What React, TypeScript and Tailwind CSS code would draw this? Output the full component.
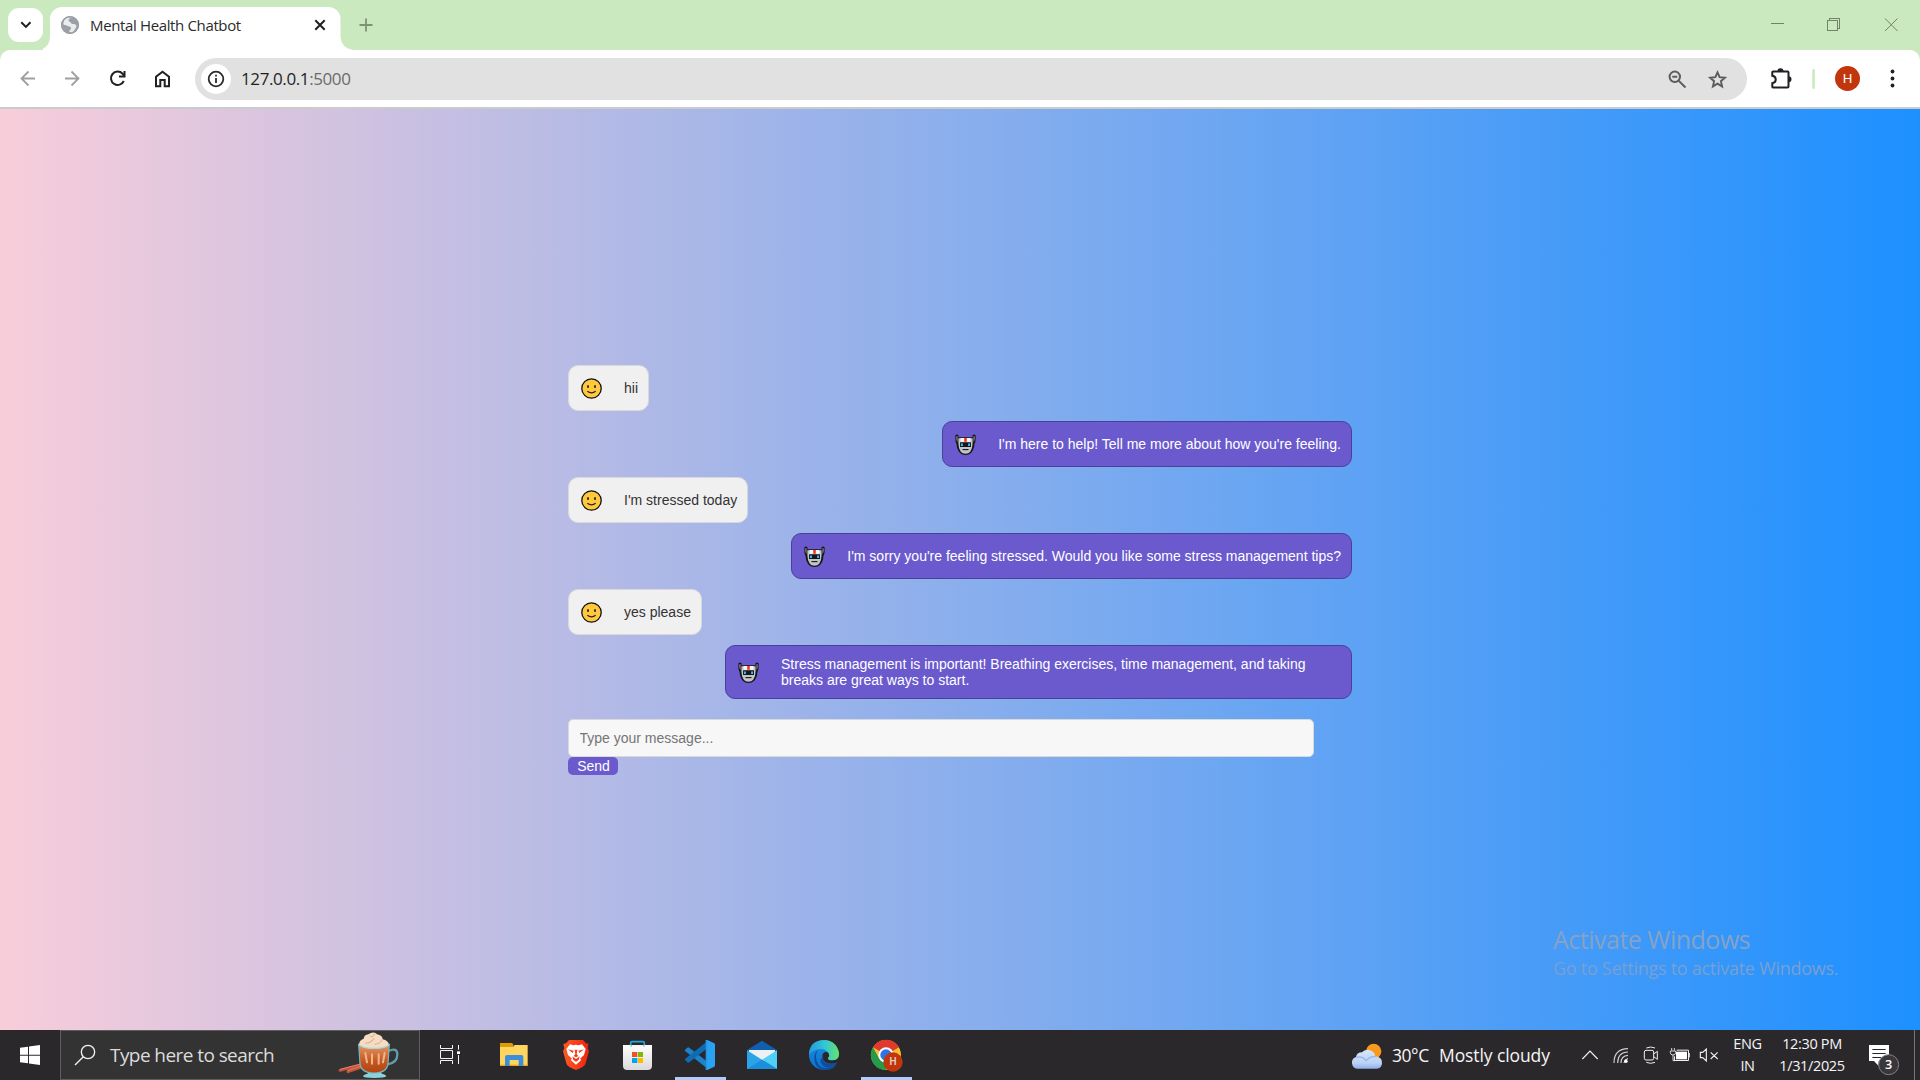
import React from 'react';

const SEGOE = "font-['Open_Sans','Noto_Sans',sans-serif]";

function TabStrip() {
  return (
    <div className="flex h-[50px] shrink-0 bg-[#cbe9bf]">
      <button className="ml-2 mt-2 flex h-[34px] w-[35px] shrink-0 items-center justify-center rounded-[11px] bg-white">
        <svg width="35" height="34" viewBox="0 0 35 34" fill="none" stroke="#1f1f1f" strokeWidth="2">
          <path d="M13.3 14.3l4.6 4.6 4.6-4.6" />
        </svg>
      </button>
      <div className="grid h-[50px] w-[310px] shrink-0">
        <svg className="col-start-1 row-start-1" width="310" height="50" viewBox="0 0 310 50">
          <path d="M-8 50Q7 50 7 36V19A12 12 0 0 1 19 7H285.500A12 12 0 0 1 297.500 19V36Q298.500 50 313 50Z" fill="#fff" />
          <circle cx="27" cy="25" r="9" fill="#9aa0a6" />
          <path d="M21 20.500c1.500-2.800 4.500-3.800 7.800-3.200-1.200 1.200-3.400 1.200-3.300 3.200.1 1.600 2.200 1 2.600 2.600.4 1.800 3.200.4 4.600 1.700 1 .9 1 2.600-.3 3.700-.9 1.100-1.300 3-3.500 3.800-1 .3-3-.1-2.600-1.200.3-1.400 1.800-1.200 1.800-3.100-.1-1.700-2.800-1.300-4-2.300-1-.8-3.300-.5-3.900-1.700" fill="#e9ebed" />
          <circle cx="27" cy="25" r="8.300" fill="none" stroke="#9aa0a6" strokeWidth="1.400" />
          <path d="M272.300 20.300l9.400 9.400M281.700 20.300l-9.400 9.400" stroke="#1f1f1f" strokeWidth="2" />
        </svg>
        <span className={`${SEGOE} col-start-1 row-start-1 ml-[47px] mt-[10px] whitespace-nowrap text-[15px] leading-[30px] tracking-[-0.360px] text-[#2b2b2b]`}>
          Mental Health Chatbot
        </span>
      </div>
      <svg className="shrink-0" width="32" height="50" viewBox="353 0 32 50" stroke="#7f9278" strokeWidth="1.800">
        <path d="M359.500 25h13M366 18.500v13" />
      </svg>
      <div className="grow" />
      <svg className="shrink-0" width="180" height="50" viewBox="1740 0 180 50" fill="none" stroke="#72836b" strokeWidth="1" shapeRendering="crispEdges">
        <path d="M1771 23.500h13" />
        <path d="M1827.500 20.500h10v10h-10zM1829.500 20v-1.500h10v10h-1.500" />
        <path d="M1885 18.500l12.500 12.500M1897.500 18.500l-12.500 12.500" shapeRendering="auto" />
      </svg>
    </div>
  );
}

function Toolbar() {
  return (
    <div className="h-[59px] shrink-0 bg-[#cbe9bf]">
      <div className="flex h-[59px] items-center rounded-t-[10px] border-b-2 border-[#cacccb] bg-white">
        <svg className="shrink-0" width="195" height="57" viewBox="0 50 195 57" fill="none" strokeWidth="2">
          <g stroke="#a0a0a0" strokeWidth="1.800">
            <path d="M35 78.500H21.500M28.500 71.500l-7 7 7 7" />
            <path d="M65 78.500h13.500M71.500 71.500l7 7-7 7" />
          </g>
          <g stroke="#202124" strokeWidth="2">
            <path d="M123.800 81a6.700 6.700 0 1 1-1.200-7.300l1.600 1.800" />
            <path d="M124.500 71v5.500h-5.500" />
            <path d="M156 86.300v-9.500l6.500-5 6.500 5v9.500h-4.300v-6.300h-4.400v6.300z" />
          </g>
        </svg>
        <div className="mt-[1px] flex h-[42px] w-[1552px] shrink-0 items-center rounded-full bg-[#e1e1e1] pl-1.5">
          <span className="flex size-[30px] items-center justify-center rounded-full bg-white">
            <svg width="18" height="18" viewBox="0 0 18 18" fill="none" stroke="#2b2c2e" strokeWidth="1.800">
              <circle cx="9" cy="9" r="7.300" />
              <path d="M9 8v5M9 4.800v1.800" />
            </svg>
          </span>
          <span className={`${SEGOE} ml-[10px] w-[200px] whitespace-nowrap text-[17px] leading-[24px] tracking-[-0.400px] text-[#1f1f1f]`}>
            127.0.0.1<span className="text-[#6b6b6b]">:5000</span>
          </span>
          <span className="grow" />
          <svg width="87" height="42" viewBox="1660 58 87 42" fill="none" stroke="#5c5c5c" strokeWidth="2">
            <circle cx="1674.800" cy="76.800" r="5.200" />
            <path d="M1678.600 80.600l6.900 6.900M1672.300 76.800h5" />
            <path d="M1717.500 72.300l2.100 4.900 5.300.5-4 3.500 1.200 5.200-4.600-2.800-4.600 2.800 1.200-5.200-4-3.500 5.300-.5z" strokeWidth="1.900" />
          </svg>
        </div>
        <svg className="shrink-0" width="173" height="57" viewBox="1747 50 173 57" fill="none">
          <path d="M1773 71.500h14.500q1 0 1 1v14q0 1-1 1H1773q-.7 0-.7-.8v-3.500c4.600-.8 4.600-6.600 0-7.400v-3.500q0-.8.7-.8z" stroke="#202124" strokeWidth="2" />
          <path d="M1777.500 71.300a3 3 0 0 1 6 0zM1788.500 76.300a3 3 0 0 1 0 6z" fill="#202124" />
          <rect x="1812.300" y="69" width="2.600" height="20" rx="1.300" fill="#cbe9bf" />
          <circle cx="1847.500" cy="78.500" r="12.500" fill="#c1360b" />
          <text x="1847.500" y="83.300" textAnchor="middle" fontFamily="Roboto" fontSize="13.500" fill="#fff">H</text>
          <g fill="#202124">
            <circle cx="1892.500" cy="71.500" r="1.900" />
            <circle cx="1892.500" cy="78.500" r="1.900" />
            <circle cx="1892.500" cy="85.500" r="1.900" />
          </g>
        </svg>
      </div>
    </div>
  );
}

function Smiley() {
  return (
    <svg className="shrink-0" width="21" height="21" viewBox="0 0 21 21">
      <circle cx="10.500" cy="10.500" r="9.700" fill="#ffc83d" stroke="#111" strokeWidth="1.300" />
      <ellipse cx="7" cy="8.500" rx="1" ry="1.500" fill="#222" />
      <ellipse cx="14" cy="8.500" rx="1" ry="1.500" fill="#222" />
      <path d="M6.300 13.300q4.200 3.200 8.400 0" fill="none" stroke="#222" strokeWidth="1.100" />
    </svg>
  );
}

function Robot() {
  return (
    <svg className="shrink-0" width="21" height="21" viewBox="0 0 21 21">
      <path d="M.4 1.200q1.500-1.500 3.100 0V3.200h14V1.200q1.600-1.500 3.100 0V6q-.2 2.500-1.200 4-.2 5.500-3.400 9-2 1.900-5.500 1.900T5 19q-3.200-3.500-3.400-9Q.6 8.500.4 6z" fill="#15151a" />
      <path d="M1.400 2.300h1.100v6q-.9-1.300-1.100-3zM19.600 2.300h-1.100v6q.9-1.300 1.100-3z" fill="#9a9a9a" />
      <path d="M3.400 4.200h14.200v5q0 5.200-2.400 8.500-1.500 2-4.700 2t-4.700-2q-2.400-3.300-2.400-8.500z" fill="#c3c4c7" />
      <path d="M5.500 4h10v3.800h-10z" fill="#f7f7f7" />
      <path d="M9.200 4h2.600v3.800H9.200z" fill="#f03a17" />
      <rect x="5" y="8.300" width="11" height="4.700" rx=".6" fill="#15151a" />
      <path d="M5.900 9.500h2v2.400h-2zM13.100 9.500h2v2.400h-2z" fill="#35bff0" />
      <path d="M7.500 15.600h6" stroke="#15151a" strokeWidth="1.100" />
    </svg>
  );
}

type Message = { from: 'user' | 'bot'; text: string };

const messages: Message[] = [
  { from: 'user', text: 'hii' },
  { from: 'bot', text: "I'm here to help! Tell me more about how you're feeling." },
  { from: 'user', text: "I'm stressed today" },
  { from: 'bot', text: "I'm sorry you're feeling stressed. Would you like some stress management tips?" },
  { from: 'user', text: 'yes please' },
  { from: 'bot', text: 'Stress management is important! Breathing exercises, time management, and taking breaks are great ways to start.' },
];

function Bubble({ from, text }: Message) {
  const tone =
    from === 'user'
      ? 'self-start border-[#d9d9dc] bg-[#f0f0f0] text-[#333]'
      : 'self-end border-[#4c3f96] bg-[#6a5acd] text-white';
  return (
    <div className={`flex min-h-[46px] max-w-[627px] items-center rounded-[10px] border py-[10px] pl-3 pr-[10px] ${tone}`}>
      {from === 'user' ? <Smiley /> : <Robot />}
      <span className="ml-[22px] leading-[16px]">{text}</span>
    </div>
  );
}

function ChatPage() {
  return (
    <main className="relative flex h-[921px] shrink-0 justify-center bg-[linear-gradient(to_right,#f8cdda,#1d90ff)] pt-[256px] font-['Liberation_Sans',Arial,sans-serif] text-[14px]">
      <div className="flex w-[784px] flex-col">
        <div className="flex flex-col gap-[10px]">
          {messages.map((m) => (
            <Bubble key={m.text} from={m.from} text={m.text} />
          ))}
        </div>
        <input
          className="mt-5 h-[38px] w-[746px] shrink-0 rounded-[5px] border border-[#d9d9d9] bg-[#f7f7f7] px-[10.500px] placeholder-[#757575]"
          placeholder="Type your message..."
        />
        <button className="h-[18px] w-[50px] shrink-0 rounded-[5px] bg-[#6a5acd] pl-px text-[14px] leading-[18px] text-white">Send</button>
      </div>
      <div className={`${SEGOE} absolute left-[1553px] top-[813px] whitespace-nowrap text-[#86a2c6]`}>
        <div className="text-[25px] leading-[34px] tracking-[-0.500px]">Activate Windows</div>
        <div className="text-[18px] leading-[25px] tracking-[-0.280px] text-[#78a0d2]">Go to Settings to activate Windows.</div>
      </div>
    </main>
  );
}

function Mug() {
  return (
    <svg className="ml-auto shrink-0" width="84" height="48" viewBox="1003 18 252 144">
      <defs>
        <linearGradient id="cocoa" x1="0" y1="0" x2="0" y2="1">
          <stop offset="0" stopColor="#e89a68" />
          <stop offset=".55" stopColor="#c65a22" />
          <stop offset="1" stopColor="#b0420f" />
        </linearGradient>
      </defs>
      <path d="M1018 136l64-17M1042 140l40-14" stroke="#c4523a" strokeWidth="9" strokeLinecap="round" />
      <path d="M1018 133l64-16M1040 137l40-13" stroke="#e58a72" strokeWidth="2.500" />
      <path d="M1163 78q27-12 27 10 0 26-29 30" fill="none" stroke="#5f9eac" strokeWidth="7" />
      <path d="M1102 136h38l3 10q14 3 14 8-4 5-36 5t-34-5q0-5 14-8z" fill="#8bd3dc" />
      <path d="M1074 58h92l-4 58q-3 28-42 28t-42-28z" fill="url(#cocoa)" stroke="#76b9c4" strokeWidth="3.500" />
      <path d="M1094 84l5 28M1114 88v28M1134 88v28M1152 84l-5 28" stroke="#eeb58f" strokeWidth="6" strokeLinecap="round" />
      <path d="M1075 60q0-15 14-19 2-12 14-13 10-8 20-5 6 6 13 7 10 4 10 13 17 3 19 17-20 12-46 11-27 0-44-11z" fill="#f5dcc3" />
      <path d="M1094 54q16 2 26-14M1122 58q18-2 22-14M1108 34q10 4 14-9" fill="none" stroke="#dfb590" strokeWidth="3.500" />
      <path d="M1074 58q10 12 46 12t46-12" fill="none" stroke="#9bdde3" strokeWidth="4" />
    </svg>
  );
}

function AppCell({ box, active, children }: { box: string; active?: boolean; children: React.ReactNode }) {
  return (
    <div className="relative h-[50px] w-[62px] shrink-0">
      <svg width="62" height="50" viewBox={box}>{children}</svg>
      {active && <span className="absolute bottom-0 left-[6px] h-[3px] w-[51px] bg-[#b0ccfb]" />}
    </div>
  );
}

function Apps() {
  return (
    <>
      <svg className="shrink-0" width="63" height="50" viewBox="0 15 189 150" fill="none" stroke="#f4f4f4" strokeWidth="3">
        <path d="M61.500 60v10.500h36V60M61.500 117v-10.500h36V117M61.500 76.500h36v24h-36zM115.500 60v14M115.500 90v27" />
        <path d="M111 79h9v8h-9z" fill="#fff" stroke="none" />
      </svg>
      <AppCell box="189 15 186 150">
        <path d="M240 54h36l5 6h-1v14h-40z" fill="#dc9c05" />
        <path d="M240 66h39l5-6h39v62h-83z" fill="#ffd55f" />
        <path d="M240 119h83v4h-83z" fill="#e6a91d" />
        <path d="M255 123V96q0-6 6-6h43q6 0 6 6v27h-14v-18h-27v18z" fill="#3a8edb" />
      </AppCell>
      <AppCell box="375 15 186 150">
        <defs>
          <linearGradient id="brave"><stop offset="0" stopColor="#ff5a24" /><stop offset="1" stopColor="#f02310" /></linearGradient>
        </defs>
        <path d="M447 45h42l9 10 7 1-2 14 4 9-11 39q-3 8-28 17-25-9-28-17l-11-39 4-9-3-13 8-2z" fill="url(#brave)" />
        <path d="M450 58l10 3 8-2 8 2 10-3 11 14-5 18-12 11 4 4-16 14-16-14 4-4-12-11-5-18z" fill="#fff" />
        <path d="M444 73l17 4-3 7zM492 73l-17 4 3 7zM464 74h8l-2 14 5 5-7 4-7-4 5-5zM457 94l11 8 11-8-3 11-8 5-8-5z" fill="#f43b18" />
      </AppCell>
      <AppCell box="561 15 186 150">
        <defs>
          <linearGradient id="store" x1="0" y1="0" x2="0" y2="1"><stop offset="0" stopColor="#fff" /><stop offset="1" stopColor="#d9d9d9" /></linearGradient>
        </defs>
        <path d="M632 65V54q0-4 4-4h33q4 0 4 4v11" fill="none" stroke="#22a8df" strokeWidth="5" />
        <path d="M609 60h23v5h41v-5h23v62q0 13-13 13h-61q-13 0-13-13z" fill="url(#store)" />
        <path d="M634 60h37v6h-37z" fill="#f7f7f7" />
        <path d="M636 81h16v15h-16z" fill="#f25022" />
        <path d="M654 81h15v15h-15z" fill="#7fba00" />
        <path d="M636 99h16v15h-16z" fill="#00a4ef" />
        <path d="M654 99h15v15h-15z" fill="#ffb900" />
      </AppCell>
      <AppCell box="747 15 186 150" active>
        <path d="M795 74l7-6q3-2 6 0l55 43v20L795 78z" fill="#1b82cc" />
        <path d="M795 105l7 7q3 2 6 0l55-43V48l-68 54z" fill="#0e6cb5" />
        <path d="M862 45l21 10q2 1 2 4v62q0 3-2 4l-21 10q-4 1-7-3 6 2 6-4V52q0-6-6-4 3-4 7-3z" fill="#2aa2f2" />
        <path d="M857 48v84l5 3V45z" fill="#2496e6" />
      </AppCell>
      <AppCell box="933 15 186 150">
        <path d="M981 75l45-28 45 28v12h-90z" fill="#0f5fae" />
        <path d="M987 75h78v20l-39 16-39-16z" fill="#eef0f2" />
        <path d="M981 76l90 56h-90z" fill="#2aa4e6" />
        <path d="M1071 76l-45 28 45 28z" fill="#50d0f8" />
        <path d="M981 132l45-28 45 28z" fill="#1b8fdc" />
      </AppCell>
      <AppCell box="1119 15 186 150">
        <defs>
          <linearGradient id="edgeTop"><stop offset="0" stopColor="#2598dd" /><stop offset=".5" stopColor="#31c5d6" /><stop offset="1" stopColor="#64e36c" /></linearGradient>
          <linearGradient id="edgeBase" x1="0" y1="0" x2="0" y2="1"><stop offset="0" stopColor="#1b8fdf" /><stop offset="1" stopColor="#0a71cc" /></linearGradient>
        </defs>
        <circle cx="1212" cy="90" r="45" fill="url(#edgeBase)" />
        <path d="M1193 76q-12 22 3 43 14 19 52 1-12 17-35 15-31-4-30-38 1-14 10-21z" fill="#104e9b" />
        <path d="M1219 81q-12 1-12 12 0 21 25 23 12 1 19-3l7-10V90z" fill="#2a272c" />
        <path d="M1208 96q0 20 26 20 9 0 17-4-8 15-25 16-18 0-24-17-3-8 6-15z" fill="#104e9b" />
        <path d="M1167 90q0-43 44-45 39 1 46 39 2 21-18 22-18 0-15-7 6-7 2-14-10-16-31-12-20 4-28 17z" fill="url(#edgeTop)" />
      </AppCell>
      <AppCell box="1305 15 186 150" active>
        <circle cx="1398" cy="90" r="45" fill="#fbc12d" />
        <path d="M1398 90l-39-23a45 45 0 0 1 78 0z" fill="#e0392d" />
        <path d="M1359 67a45 45 0 0 0 39 68l20-34-20-11-20 11z" fill="#249a4a" />
        <circle cx="1398" cy="90" r="23" fill="#fff" />
        <circle cx="1398" cy="90" r="17" fill="#2f74e6" />
        <circle cx="1419" cy="111" r="29" fill="#c1360b" />
        <text x="1419" y="121" textAnchor="middle" fontFamily="Roboto" fontWeight="600" fontSize="30" fill="#e7cfc8">H</text>
      </AppCell>
    </>
  );
}

function Tray() {
  return (
    <>
      <svg className="shrink-0" width="37" height="50" viewBox="60 15 111 150">
        <defs>
          <linearGradient id="cloud" x1="0" y1="0" x2="0" y2="1"><stop offset="0" stopColor="#d6e5fb" /><stop offset=".7" stopColor="#bcd2f5" /><stop offset="1" stopColor="#8fb0ea" /></linearGradient>
        </defs>
        <circle cx="131" cy="79" r="23" fill="#f99a1c" />
        <path d="M84 131a18 18 0 0 1-6-35q2-14 18-14 8-10 22-7 16 4 18 19 20 2 20 19 0 17-16 18z" fill="url(#cloud)" />
        <path d="M79 97q18-5 29 10 12-14 29-12" fill="none" stroke="#94b4ec" strokeWidth="4" />
      </svg>
      <span className={`${SEGOE} w-[48px] whitespace-nowrap pl-[5px] text-[17.500px] tracking-[-0.450px]`}>30°C</span>
      <span className={`${SEGOE} w-[135px] whitespace-nowrap pl-[4px] text-[17.500px] tracking-[-0.100px]`}>Mostly cloudy</span>
      <svg className="shrink-0" width="155" height="50" viewBox="0 15 465 150" fill="none" stroke="#f0f0f0" strokeWidth="3">
        <path d="M37 102l23-24 23 24" strokeWidth="3.500" />
        <path d="M132 114q0-42 42-43M143 114q0-32 31-33M153 114q0-22 21-23" stroke="#cfcfd1" strokeWidth="3.400" />
        <path d="M162 114q0-12 12-13" stroke="#fff" />
        <circle cx="168" cy="109" r="5" fill="#fff" stroke="none" />
        <rect x="223" y="76" width="28" height="29" rx="5" />
        <path d="M251 87l11-8v24l-11-8M229 69q13-6 26 0M229 112q13 6 26 0" />
        <path d="M320 75.500h35.500v31h-42V94M358 84v13" />
        <path d="M318 80h33v23h-33z" fill="#fff" stroke="none" />
        <path d="M305 69v8M313 69v8M301 78h16v5q0 7-8 7t-8-7zM309 90v17h6" strokeWidth="2.600" />
        <path d="M391 82h7l11-10v36l-11-10h-7zM422 82l21 20M443 82l-21 20" strokeWidth="3.400" />
      </svg>
      <div className={`${SEGOE} flex w-[45px] flex-col items-center text-[14.500px] leading-[22px] tracking-[-0.400px]`}>
        <span>ENG</span>
        <span>IN</span>
      </div>
      <div className={`${SEGOE} flex w-[84px] flex-col items-center text-[14.500px] leading-[22px] tracking-[-0.350px]`}>
        <span>12:30 PM</span>
        <span>1/31/2025</span>
      </div>
      <svg className="shrink-0" width="66" height="50" viewBox="852 15 198 150">
        <path d="M897 60h60v48h-31v15l-14-15h-15z" fill="#fff" />
        <path d="M907 73.500h40M907 85.500h40M907 97.500h26" stroke="#29262b" strokeWidth="3" />
        <circle cx="956" cy="119" r="30" fill="#39373b" stroke="#848286" strokeWidth="3" />
        <text x="956" y="133" textAnchor="middle" fontFamily="Open Sans" fontWeight="600" fontSize="38" fill="#fff">3</text>
        <path d="M1033.500 15v150" stroke="#77757a" strokeWidth="3" />
      </svg>
    </>
  );
}

function Taskbar() {
  return (
    <footer className="flex h-[50px] shrink-0 items-center bg-[#2b282c] text-[#f5f5f5]">
      <svg className="shrink-0" width="60" height="50" viewBox="0 15 180 150" fill="#fff">
        <path d="M60 68l24-3v24H60zM87 64.500l33-4.500v29H87zM60 92h24v23l-24-3zM87 92h33v28l-33-4.500z" />
      </svg>
      <div className="flex h-[50px] w-[360px] shrink-0 items-center border border-[#5d5d5d] bg-[#333]">
        <svg className="shrink-0" width="48" height="48" viewBox="183 18 144 144" fill="none" stroke="#f2f2f2" strokeWidth="4">
          <circle cx="264" cy="81" r="20" />
          <path d="M250 95l-25 25" />
        </svg>
        <span className={`${SEGOE} whitespace-nowrap pl-[1px] text-[19px] tracking-[-0.570px] text-[#dcdcdc]`}>Type here to search</span>
        <Mug />
      </div>
      <Apps />
      <div className="grow" />
      <Tray />
    </footer>
  );
}

export default function App() {
  return (
    <div className="flex h-[1080px] w-[1920px] flex-col overflow-hidden">
      <TabStrip />
      <Toolbar />
      <ChatPage />
      <Taskbar />
    </div>
  );
}
